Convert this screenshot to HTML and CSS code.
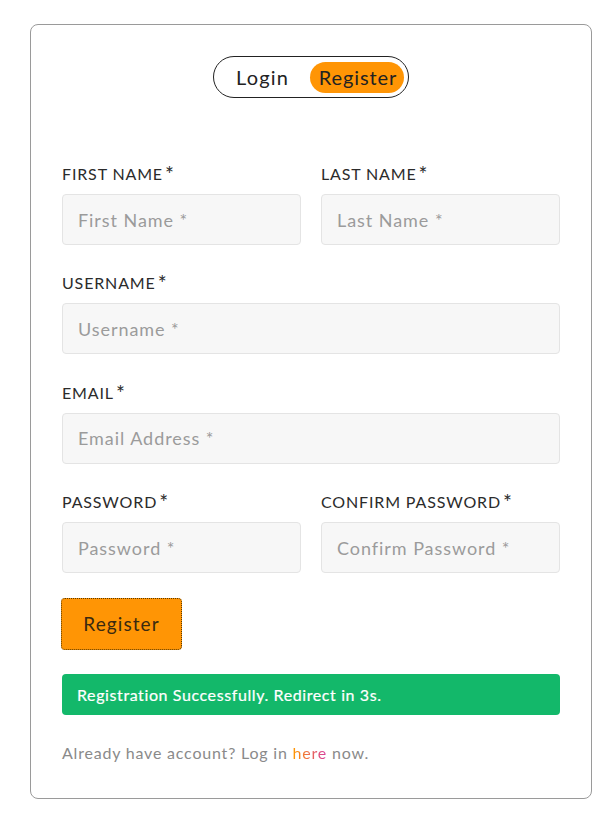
FILE: index.html
```html
<!DOCTYPE html>
<html>
<head>
<meta charset="utf-8">
<link rel="stylesheet" href="styles.css">
</head>
<body>
<div class="card">
  <div class="toggle-wrap">
    <div class="toggle">
      <span class="tab">Login</span>
      <span class="tab active">Register</span>
    </div>
  </div>
  <form class="form">
    <div class="row two">
      <div class="field">
        <label class="label">FIRST NAME<span class="req">*</span></label>
        <div class="input">First Name *</div>
      </div>
      <div class="field">
        <label class="label">LAST NAME<span class="req">*</span></label>
        <div class="input">Last Name *</div>
      </div>
    </div>
    <div class="row">
      <div class="field">
        <label class="label">USERNAME<span class="req">*</span></label>
        <div class="input">Username *</div>
      </div>
    </div>
    <div class="row">
      <div class="field">
        <label class="label">EMAIL<span class="req">*</span></label>
        <div class="input">Email Address *</div>
      </div>
    </div>
    <div class="row two">
      <div class="field">
        <label class="label">PASSWORD<span class="req">*</span></label>
        <div class="input">Password *</div>
      </div>
      <div class="field">
        <label class="label">CONFIRM PASSWORD<span class="req">*</span></label>
        <div class="input">Confirm Password *</div>
      </div>
    </div>
    <div class="btn-row"><span class="btn">Register</span></div>
    <div class="alert">Registration Successfully. Redirect in 3s.</div>
    <p class="footer">Already have account? Log in <span class="here">here</span> now.</p>
  </form>
</div>
</body>
</html>
```

FILE: styles.css
```css
* { box-sizing: border-box; }
html, body { margin: 0; padding: 0; background: #fff; }
body {
  font-family: "Lato", "Noto Sans", sans-serif;
  color: #2b2b2b;
  padding: 24px 16px 0 30px;
}
.card {
  width: 562px;
  height: 775px;
  border: 1px solid #9a9a9a;
  border-radius: 8px;
  padding: 31px 31px 0 31px;
}
.toggle-wrap { display: flex; justify-content: center; }
.toggle {
  width: 196px;
  height: 42px;
  border: 1px solid #222;
  border-radius: 21px;
  display: flex;
  align-items: center;
  padding: 0 4px 0 8px;
  justify-content: space-between;
}
.tab {
  font-size: 20px;
  line-height: 31px;
  padding: 0 0 0 14px;
  color: #222;
  letter-spacing: 1.2px;
}
.tab.active {
  background: #ff9505;
  border-radius: 16px;
  padding: 0 0 0 2px;
  width: 94px;
  text-align: center;
  letter-spacing: 0.9px;
}
.form { margin-top: 64px; }
.row { display: flex; gap: 20px; margin-bottom: 26.4px; }
.field { flex: 1; display: flex; flex-direction: column; }
.label {
  display: block;
  height: 24px;
  font-size: 16px;
  line-height: 24px;
  color: #2b2b2b;
  margin-bottom: 8px;
  letter-spacing: 0.85px;
}
.req { font-size: 21px; line-height: 0; position: relative; top: 2px; margin-left: 2px; letter-spacing: 0; }
.input {
  height: 51px;
  background: #f7f7f7;
  border: 1px solid #e4e4e4;
  border-radius: 4px;
  font-size: 18px;
  color: #9b9b9b;
  padding: 0 15px;
  display: flex;
  align-items: center;
  letter-spacing: 0.95px;
}
.btn-row { display: flex; margin-top: -2px; margin-left: -1px; }
.btn {
  width: 121px;
  height: 52px;
  background: #ff9505;
  border: 1px dotted #5a3a00;
  border-radius: 4px;
  font-size: 19px;
  color: #3a2a10;
  display: flex;
  align-items: center;
  justify-content: center;
  letter-spacing: 1.1px;
}
.alert {
  margin-top: 24px;
  height: 41px;
  background: #13b86a;
  border-radius: 4px;
  color: #fff;
  font-size: 16px;
  padding: 0 15px;
  display: flex;
  align-items: center;
  letter-spacing: 0.6px;
  -webkit-text-stroke: 0.2px #fff;
}
.footer {
  margin: 28px 0 0 0;
  font-size: 16px;
  color: #8a8a8a;
  letter-spacing: 0.8px;
}
.here {
  background: linear-gradient(90deg, #ff9800, #d63aa0);
  -webkit-background-clip: text;
  background-clip: text;
  color: transparent;
}
```
